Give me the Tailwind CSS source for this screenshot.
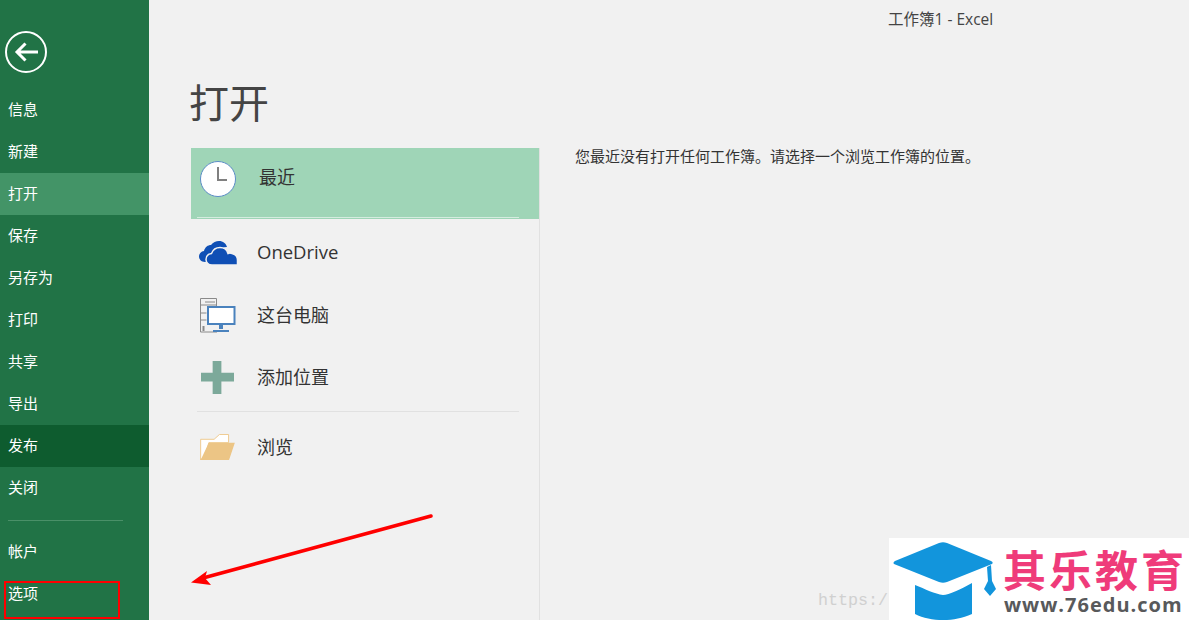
<!DOCTYPE html>
<html lang="zh-CN">

<head>
    <meta charset="UTF-8">
    <title>工作簿1 - Excel</title>
    <script src="https://cdn.jsdelivr.net/npm/@tailwindcss/browser@4"></script>
</head>

<body class="relative w-[1189px] h-[620px] overflow-hidden flex bg-[#f1f1f1] font-['Open_Sans','Noto_Sans_CJK_SC',sans-serif]">
    <!-- Sidebar -->
    <aside class="w-[149px] h-full shrink-0 bg-[#217346] text-white text-[15px] flex flex-col pt-[31px]">
        <button class="ml-[5px] w-[42px] h-[42px] mb-[16px]">
            <svg width="42" height="42" viewBox="0 0 42 42" fill="none" stroke="#fff">
                <circle cx="21" cy="21" r="20" stroke-width="2" />
                <path d="M33 21H12M20.500 12.500L12 21l8.500 8.500" stroke-width="3" />
            </svg>
        </button>
        <a class="h-[42px] pl-2 pb-[2px] flex items-center">信息</a>
        <a class="h-[42px] pl-2 pb-[2px] flex items-center">新建</a>
        <a class="h-[42px] pl-2 pb-[2px] flex items-center bg-[#439467]">打开</a>
        <a class="h-[42px] pl-2 pb-[2px] flex items-center">保存</a>
        <a class="h-[42px] pl-2 pb-[2px] flex items-center">另存为</a>
        <a class="h-[42px] pl-2 pb-[2px] flex items-center">打印</a>
        <a class="h-[42px] pl-2 pb-[2px] flex items-center">共享</a>
        <a class="h-[42px] pl-2 pb-[2px] flex items-center">导出</a>
        <a class="h-[42px] pl-2 pb-[2px] flex items-center bg-[#0e5c2f]">发布</a>
        <a class="h-[42px] pl-2 pb-[2px] flex items-center">关闭</a>
        <div class="h-px w-[115px] ml-2 mt-[11px] mb-[9px] bg-[#4a9068]"></div>
        <a class="h-[42px] pl-2 flex items-center">帐户</a>
        <a class="h-[42px] pl-2 flex items-center">选项</a>
    </aside>

    <!-- Main -->
    <main class="flex-1 flex flex-col min-w-0">
        <div class="h-[38px] pt-[2px] flex items-center pl-[739px] text-[15.500px] text-[#444] whitespace-nowrap">工作簿1 - Excel</div>
        <h1 class="ml-[40px] mt-[35px] h-[60px] leading-[60px] text-[40px] text-[#444]">打开</h1>
        <div class="flex flex-1 mt-[15px] ml-[42px]">
            <div class="w-[349px] border-r border-[#e1e1e1] text-[18px] text-[#333]">
                <div class="h-[71px] bg-[#9fd5b7] relative flex items-start pl-[9px] pt-[13px]">
                    <svg width="36" height="36" viewBox="0 0 36 36">
                        <circle cx="18" cy="18" r="17.500" fill="#fff" stroke="#5b8cc6" />
                        <path d="M18 6v13h9" fill="none" stroke="#808080" stroke-width="2" />
                    </svg>
                    <span class="ml-[23px] leading-[30px] mt-[1px]">最近</span>
                    <div class="absolute left-[6px] bottom-[1px] w-[322px] h-px bg-[#d4ecdf]"></div>
                </div>
                <div class="h-[65px] flex items-center pl-[8px] pt-[2px]">
                    <svg width="39" height="24" viewBox="0 0 39 24">
                        <path fill="#0f4fb5" d="M6 21C2 21 0 18 0 15.500 0 12.500 2 10.500 5 10 6 6 9 4 12 4 14 1.500 17 0 20 0c4 0 7 2.500 8 6-4 0-7 2-8.500 5C14 11 11 15 11 21z" />
                        <path fill="#0f4fb5" stroke="#f1f1f1" stroke-width="1.500" d="M13 24c-4 0-6-3-6-5.500 0-3 2-5.500 5.500-6C14 8.500 17 6.500 21 6.500c4 0 7 2.500 8 6 1-.5 2.500-.5 4 0 3 .8 5.500 3 5.500 6.500V24z" />
                    </svg>
                    <span class="ml-[19px] mt-[-2px] text-[18.500px]">OneDrive</span>
                </div>
                <div class="h-[62px] flex items-center pl-[9px]">
                    <svg width="36" height="35" viewBox="0 0 36 35" fill="none">
                        <path d="M17 34H.5V.500h16V8M.5 7h16M.5 15h6M.5 22h6M5 4h10" stroke="#8a8a8a" />
                        <path d="M3.500 28v5" stroke="#8a8a8a" stroke-width="2" />
                        <rect x="8" y="9" width="26.500" height="17" fill="#fff" stroke="#4a82bd" stroke-width="2" />
                        <path d="M19 27h4v4h-4zM13 32h16v2H13z" fill="#4a82bd" />
                    </svg>
                    <span class="ml-[21px]">这台电脑</span>
                </div>
                <div class="h-[62px] flex items-center pl-[10px]">
                    <svg width="33" height="33" viewBox="0 0 34 34">
                        <path fill="#7ca99a" d="M12 0h9v12h13v9H21v13h-9V21H0v-9h12z" />
                    </svg>
                    <span class="ml-[23px]">添加位置</span>
                </div>
                <div class="h-px w-[322px] ml-[6px] mt-[3px] bg-[#e1e1e1]"></div>
                <div class="h-[70px] flex items-center pl-[9px]">
                    <svg width="35" height="26" viewBox="0 0 36 27">
                        <path d="M.5 26V5.500h14L20 .500h9.500V9H9L4 26z" fill="#fff" stroke="#eec98c" />
                        <path d="M9 9h27l-6 18H0v-1h1z" fill="#ecc585" />
                    </svg>
                    <span class="ml-[22px]">浏览</span>
                </div>
            </div>
            <p class="ml-[35px] mt-[-3px] text-[15px] leading-[22px] text-[#333]">您最近没有打开任何工作簿。请选择一个浏览工作簿的位置。</p>
        </div>
    </main>

    <!-- Annotations over the screenshot -->
    <div class="absolute left-[4px] top-[581px] w-[116px] h-[38px] border-2 border-[#f00]"></div>
    <svg class="absolute left-0 top-0 pointer-events-none" width="1189" height="620" viewBox="0 0 1189 620">
        <path d="M431 516L203 578" stroke="#f00" stroke-width="3.500" stroke-linecap="round" />
        <path d="M191 582.500L207 571 205 578 211 585z" fill="#f00" />
    </svg>

    <!-- Watermark -->
    <span class="absolute left-[818px] top-[590px] font-['Liberation_Mono',monospace] text-[16.700px] leading-[22px] text-[#d0d0d0]">https:/</span>
    <div class="absolute left-[889px] top-[538px] w-[300px] h-[82px] bg-white">
        <svg class="absolute left-0 top-0" width="112" height="82" viewBox="0 0 112 82">
            <path fill="#1295dc" d="M5 26c-1-1-.5-2 1-3L50 5c3-1 5-1 8 0l44 18c2 1 2 2 1 3L58 44c-3 1-5 1-8 0z" />
            <path fill="#1295dc" d="M26 47c10 4 20 9 28 10 6 0 18-6 29-12v31c-10 4-18 6-29 6-10 0-20-2-28-6z" />
            <path fill="#1295dc" d="M98 29l4-2 1 16 4 8-6 7-6-7 4-8z" />
        </svg>
        <div class="absolute left-[114px] top-[8px] w-[186px] text-[43px] tracking-[3px] leading-[44px] font-bold text-[#ef3b7a] whitespace-nowrap font-['Noto_Sans_CJK_SC',sans-serif]">其乐教育</div>
        <div class="absolute left-[115px] top-[54px] text-[20px] leading-[26px] font-bold tracking-[1px] text-[#58595b] whitespace-nowrap">www.76edu.com</div>
    </div>
</body>

</html>
